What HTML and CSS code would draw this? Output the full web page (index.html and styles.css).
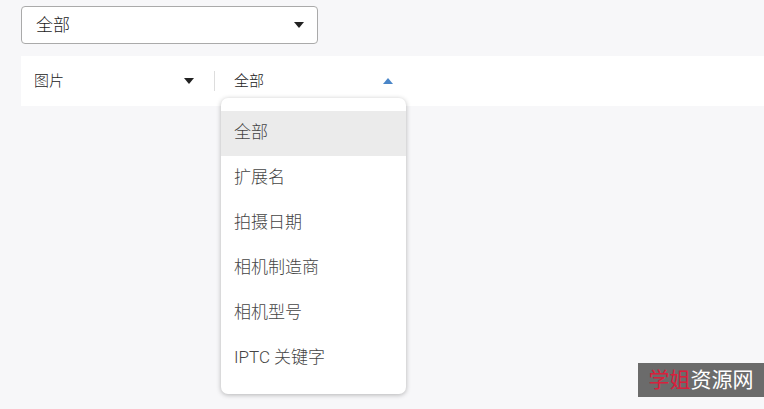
FILE: index.html
```html
<!DOCTYPE html>
<html lang="zh-CN">
<head>
  <meta charset="UTF-8" />
  <title>筛选</title>
  <link rel="stylesheet" href="styles.css">
</head>
<body>
  <!-- 顶部选择框 -->
  <div class="select-box">
    <span>全部</span>
    <span class="caret"></span>
  </div>

  <!-- 筛选栏 -->
  <div class="filter-bar">
    <div class="filter-item type">
      <span>图片</span>
      <span class="caret"></span>
    </div>
    <div class="divider"></div>
    <div class="filter-item field open">
      <span>全部</span>
      <span class="caret up"></span>
    </div>
    <ul class="menu">
      <li class="active">全部</li>
      <li>扩展名</li>
      <li>拍摄日期</li>
      <li>相机制造商</li>
      <li>相机型号</li>
      <li>IPTC 关键字</li>
    </ul>
  </div>

  <div class="watermark"><span class="red">学姐</span>资源网</div>
</body>
</html>
```

FILE: styles.css
```css
* {
  box-sizing: border-box;
}

body {
  margin: 0;
  padding: 6px 0 0 21px;
  background: #f7f7f9;
  font-family: Roboto, "Noto Sans CJK SC", sans-serif;
  color: #333;
  height: 409px;
  overflow: hidden;
  position: relative;
}

.select-box {
  width: 297px;
  height: 38px;
  border: 1px solid #aaa;
  border-radius: 4px;
  background: white;
  display: flex;
  align-items: center;
  justify-content: space-between;
  padding: 0 13px 3px 14px;
  font-size: 17px;
  font-weight: 300;
  color: #222;
}

.caret {
  width: 0;
  height: 0;
  border-left: 5px solid transparent;
  border-right: 5px solid transparent;
  border-top: 6px solid #222;
}

.select-box .caret {
  margin-top: 3px;
}

.caret.up {
  border-top: none;
  border-bottom: 6px solid #4a86c8;
}

.filter-bar {
  margin-top: 12px;
  height: 50px;
  background: white;
  display: flex;
  align-items: center;
  font-size: 15px;
  font-weight: 300;
  color: #222;
  position: relative;
}

.filter-item {
  display: flex;
  align-items: center;
  justify-content: space-between;
  padding-bottom: 3px;
}

.filter-item .caret {
  margin-top: 2px;
}

.filter-item.type {
  width: 193px;
  padding-left: 13px;
  padding-right: 20px;
}

.divider {
  width: 1px;
  height: 20px;
  background: #ddd;
}

.filter-item.field {
  width: 190px;
  padding-left: 19px;
  padding-right: 12px;
}

.menu {
  position: absolute;
  top: 42px;
  left: 200px;
  width: 185px;
  margin: 0;
  padding: 13px 0;
  list-style: none;
  background: white;
  border-radius: 7px;
  box-shadow: 0 1px 5px rgba(0,0,0,0.28);
  font-size: 17px;
  color: #444;
}

.menu li {
  height: 45px;
  line-height: 43px;
  padding-left: 13px;
}

.menu li.active {
  background: #ebebeb;
}

.watermark {
  position: absolute;
  right: 0;
  top: 363px;
  width: 126px;
  height: 34px;
  background: #6b6b6b;
  color: white;
  font-size: 21px;
  font-weight: 400;
  line-height: 34px;
  text-align: center;
}

.watermark .red {
  color: #d8203c;
}
```
